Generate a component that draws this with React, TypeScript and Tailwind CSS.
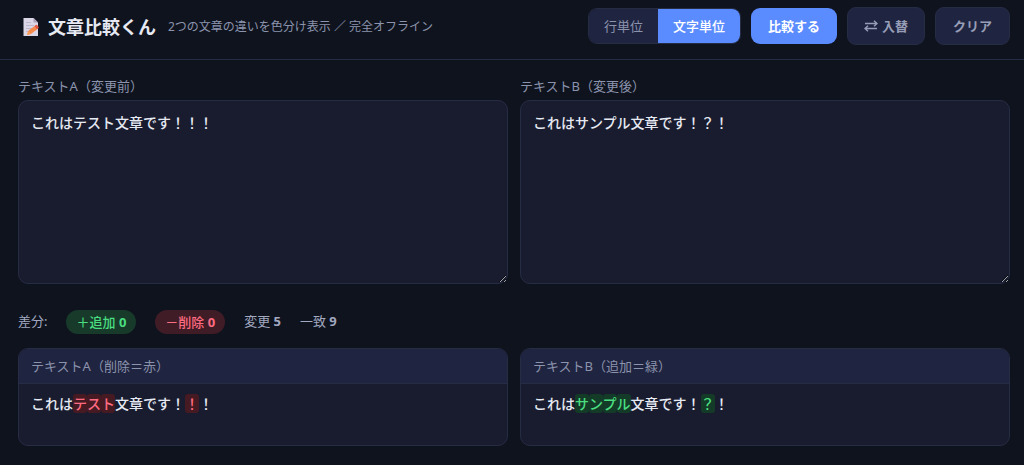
import { useState } from "react";

type Mode = "line" | "char";
type Part = { text: string; changed?: boolean };

const BEFORE: Part[] = [
  { text: "これは" },
  { text: "テ", changed: true },
  { text: "ス", changed: true },
  { text: "ト", changed: true },
  { text: "文章です！" },
  { text: "！", changed: true },
  { text: "！" },
];

const AFTER: Part[] = [
  { text: "これは" },
  { text: "サ", changed: true },
  { text: "ン", changed: true },
  { text: "プ", changed: true },
  { text: "ル", changed: true },
  { text: "文章です！" },
  { text: "？", changed: true },
  { text: "！" },
];

function MemoIcon() {
  return (
    <svg viewBox="0 0 18 20" className="h-5 w-[18px] shrink-0" aria-hidden="true">
      <path d="M1.5 1h10l4.500 4.500V19H1.500z" fill="#dcd7e6" />
      <path d="M11.500 1v4.500H16z" fill="#aaa2bd" />
      <path d="M4 5.500h5M4 8.500h8M4 11.500h6M4 14.500h3" stroke="#b9b2c8" strokeWidth="0.9" />
      <path d="M5 18l1.300-4.300 6-4.500 2.600 3.400-6 4.500z" fill="#f58a4b" />
      <path d="M12.300 9.200l1.500-1.100q1-.6 1.700.3l1 1.400q.6 1-.3 1.700l-1.300 1.100z" fill="#e2553f" />
      <path d="M5 18l1.300-4.300 2.600 3.400z" fill="#f7a05f" />
    </svg>
  );
}

function Editor({ id, label, value, onChange }: { id: string; label: string; value: string; onChange: (v: string) => void }) {
  return (
    <div className="flex min-w-0 flex-1 flex-col gap-1">
      <label htmlFor={id} className="text-[13px] leading-5 text-[#8b93ad]">
        {label}
      </label>
      <textarea
        id={id}
        value={value}
        onChange={(e) => onChange(e.target.value)}
        spellCheck={false}
        className="block h-46 w-full resize-y rounded-[10px] border border-[#272c45] bg-[#181c2e] px-3 py-2.5 text-sm leading-6 font-medium text-[#e6e9f2] outline-none focus:border-[#5b8cff]"
      />
    </div>
  );
}

function Result({ title, parts, mark }: { title: string; parts: Part[]; mark: string }) {
  return (
    <section className="min-h-[98px] min-w-0 flex-1 overflow-hidden rounded-[10px] border border-[#272c45] bg-[#181c2e]">
      <h2 className="border-b border-[#272c45] bg-[#1f2440] px-3 py-2 text-[13px] leading-[18px] text-[#8b93ad]">{title}</h2>
      <p className="px-3 py-2 text-sm leading-6 font-medium text-[#e6e9f2]">
        {parts.map((p, i) =>
          p.changed ? (
            <mark key={i} className={mark}>
              {p.text}
            </mark>
          ) : (
            <span key={i}>{p.text}</span>
          ),
        )}
      </p>
    </section>
  );
}

export default function App() {
  const [mode, setMode] = useState<Mode>("char");
  const [a, setA] = useState("これはテスト文章です！！！");
  const [b, setB] = useState("これはサンプル文章です！？！");

  const tab = (active: boolean) =>
    active ? "bg-[#5b8cff] px-[15px] font-medium text-white" : "bg-[#1f2440] px-[15px] text-[#8b93ad]";

  return (
    <div className="min-h-screen bg-[#0f131e] font-['Noto_Sans','Noto_Sans_CJK_JP',sans-serif] text-[#e6e9f2]">
      <header className="flex items-center justify-between gap-3 border-b border-[#272c45] pt-1.5 pr-3.5 pb-[13px] pl-[22px]">
        <div className="flex items-center gap-3 pt-0.5">
          <h1 className="flex items-center gap-2 text-lg leading-7 font-bold whitespace-nowrap">
            <MemoIcon />
            文章比較くん
          </h1>
          <p className="text-xs leading-5 whitespace-nowrap text-[#8b93ad]">2つの文章の違いを色分け表示 ／ 完全オフライン</p>
        </div>
        <div className="flex items-center gap-2.5 py-px text-[13px] leading-5 whitespace-nowrap">
          <div className="flex h-9 overflow-hidden rounded-[9px] border border-[#272c45]">
            <button type="button" aria-pressed={mode === "line"} onClick={() => setMode("line")} className={tab(mode === "line")}>
              行単位
            </button>
            <button type="button" aria-pressed={mode === "char"} onClick={() => setMode("char")} className={tab(mode === "char")}>
              文字単位
            </button>
          </div>
          <button type="button" className="h-9 rounded-[9px] bg-[#5b8cff] px-[17px] font-bold text-white">
            比較する
          </button>
          <button
            type="button"
            onClick={() => {
              setA(b);
              setB(a);
            }}
            className="flex h-[38px] items-center gap-1 rounded-[9px] border border-[#272c45] bg-[#1f2440] px-4 font-semibold text-[#969db6]"
          >
            <svg viewBox="0 0 14 14" className="h-3.5 w-3.5" fill="none" stroke="currentColor" strokeWidth="1.4" aria-hidden="true">
              <path d="M1 4.500h12M10 1.700l3 2.800-3 2.800M13 9.500H1M4 6.700L1 9.500l3 2.800" />
            </svg>
            入替
          </button>
          <button
            type="button"
            onClick={() => {
              setA("");
              setB("");
            }}
            className="h-[38px] rounded-[9px] border border-[#272c45] bg-[#1f2440] px-[17px] font-semibold text-[#969db6]"
          >
            クリア
          </button>
        </div>
      </header>

      <main className="pt-4 pr-3.5 pb-4 pl-[18px]">
        <div className="flex gap-3">
          <Editor id="text-a" label="テキストA（変更前）" value={a} onChange={setA} />
          <Editor id="text-b" label="テキストB（変更後）" value={b} onChange={setB} />
        </div>

        <div className="mt-[26px] mb-3.5 flex items-start gap-[19px] text-[13px] leading-[22px] text-[#a2a9c0]">
          <span>差分:</span>
          <span className="rounded-full bg-[#173a2a] px-2.5 py-px font-medium text-[#4ade80]">
            ＋追加 <b>0</b>
          </span>
          <span className="rounded-full bg-[#401c26] px-2.5 py-px font-medium text-[#ff6b81]">
            －削除 <b>0</b>
          </span>
          <span>
            変更 <b>5</b>
          </span>
          <span>
            一致 <b>9</b>
          </span>
        </div>

        <div className="flex gap-3">
          <Result title="テキストA（削除＝赤）" parts={BEFORE} mark="rounded-[3px] bg-[#451a23] text-[#ff6b81]" />
          <Result title="テキストB（追加＝緑）" parts={AFTER} mark="rounded-[3px] bg-[#143a28] text-[#4ade80]" />
        </div>
      </main>
    </div>
  );
}
